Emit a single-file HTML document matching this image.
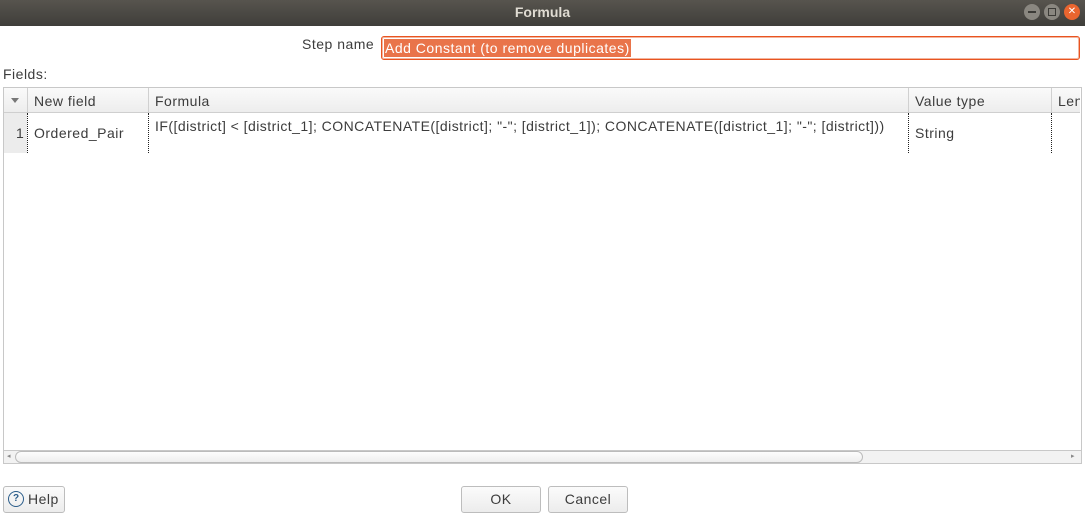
<!DOCTYPE html>
<html><head><style>
body{margin:0;width:1085px;height:518px;background:#fff;font-family:"Liberation Sans",sans-serif;font-size:14px;color:#3c3c3c;position:relative;overflow:hidden;letter-spacing:0.5px}
.abs{position:absolute}
.title{left:0;top:0;width:1085px;height:26px;background:linear-gradient(#57544e,#3f3e3a);color:#dfdbd2;font-weight:bold;text-align:center;line-height:25px;font-size:14px;letter-spacing:0}
.wb{width:16px;height:16px;border-radius:50%;top:4px;background:#8a8780}
.cell{position:absolute;white-space:nowrap}
.hdr{top:88px;height:24px;background:linear-gradient(#fafafa,#ededed);border-bottom:1px solid #cfcfcf}
.btn{top:486px;height:25px;border:1px solid #bdbdbd;border-radius:3px;background:linear-gradient(#fbfbfb,#ececec);text-align:center;line-height:25px}
</style></head><body>
<div class="abs title">Formula</div>
<div class="abs wb" style="left:1024px"><div style="position:absolute;left:4px;top:7px;width:8px;height:2px;background:#3c3b37"></div></div>
<div class="abs wb" style="left:1044px"><div style="position:absolute;left:4px;top:4px;width:6px;height:6px;border:1px solid #3c3b37"></div></div>
<div class="abs wb" style="left:1064px;background:#e9652f;color:#fff;font-size:10px;text-align:center;line-height:16px;letter-spacing:0">✕</div>
<div class="abs" style="left:302px;top:36px">Step name</div>
<div class="abs" style="left:381px;top:36px;width:697px;height:22px;border:1px solid #e95420;border-radius:3px;box-shadow:0 0 0 1px #f3b59e inset"></div>
<div class="abs" style="left:384px;top:39px;height:18px;background:#e9744a;color:#fff;line-height:18px;padding:0 1px">Add Constant (to remove duplicates)</div>
<div class="abs" style="left:3px;top:66px">Fields:</div>
<div class="abs" style="left:3px;top:87px;width:1077px;height:363px;border:1px solid #c8c8c8"></div>
<div class="abs hdr" style="left:4px;width:1076px"></div>
<div class="abs" style="left:11px;top:98px;width:0;height:0;border-left:4px solid transparent;border-right:4px solid transparent;border-top:5px solid #777"></div>
<div class="abs" style="left:27px;top:88px;width:1px;height:24px;background:#d0d0d0"></div>
<div class="abs" style="left:148px;top:88px;width:1px;height:24px;background:#d0d0d0"></div>
<div class="abs" style="left:908px;top:88px;width:1px;height:24px;background:#d0d0d0"></div>
<div class="abs" style="left:1051px;top:88px;width:1px;height:24px;background:#d0d0d0"></div>
<div class="cell" style="left:34px;top:93px">New field</div>
<div class="cell" style="left:155px;top:93px">Formula</div>
<div class="cell" style="left:915px;top:93px">Value type</div>
<div class="cell" style="left:1058px;top:93px;width:22px;overflow:hidden">Length</div>
<div class="abs" style="left:4px;top:113px;width:23px;height:40px;background:#ececec"></div>
<div class="abs" style="left:27px;top:113px;height:40px;border-left:1px dotted #222"></div>
<div class="abs" style="left:148px;top:113px;height:40px;border-left:1px dotted #222"></div>
<div class="abs" style="left:908px;top:113px;height:40px;border-left:1px dotted #222"></div>
<div class="abs" style="left:1051px;top:113px;height:40px;border-left:1px dotted #222"></div>
<div class="cell" style="left:16px;top:125px">1</div>
<div class="cell" style="left:34px;top:125px">Ordered_Pair</div>
<div class="cell" style="left:155px;top:118px;letter-spacing:0.46px">IF([district] &lt; [district_1]; CONCATENATE([district]; "-"; [district_1]); CONCATENATE([district_1]; "-"; [district]))</div>
<div class="cell" style="left:915px;top:125px">String</div>
<div class="abs" style="left:3px;top:450px;width:1077px;height:12px;border:1px solid #c8c8c8;background:#f2f2f2"></div>
<div class="abs" style="left:15px;top:451px;width:846px;height:10px;border:1px solid #bbb;border-radius:6px;background:linear-gradient(#fdfdfd,#eee)"></div>
<div class="abs" style="left:7px;top:452px;font-size:7px;color:#888">◂</div>
<div class="abs" style="left:1071px;top:452px;font-size:7px;color:#888">▸</div>
<div class="abs btn" style="left:3px;width:60px"></div>
<div class="abs" style="left:8px;top:491px;width:14px;height:14px;border:1.5px solid #2b5d8a;border-radius:50%;font-size:10px;line-height:14px;color:#2b5d8a;font-weight:bold;text-align:center;letter-spacing:0">?</div>
<div class="abs" style="left:28px;top:491px">Help</div>
<div class="abs btn" style="left:461px;width:78px">OK</div>
<div class="abs btn" style="left:548px;width:78px">Cancel</div>
</body></html>
